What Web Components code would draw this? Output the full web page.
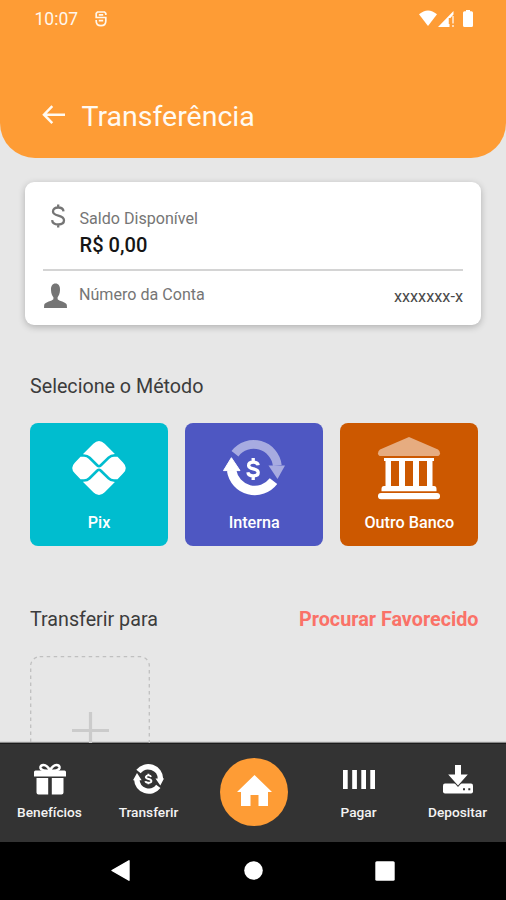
<!DOCTYPE html>
<html lang="pt-BR">
<head>
<meta charset="utf-8">
<title>Transferência</title>
<style>
html,body{margin:0;padding:0;background:#e7e7e7}
body{font-family:Roboto,"Liberation Sans",sans-serif}
</style>
</head>
<body>
<transfer-app></transfer-app>
<script>
const define = (name, css, html) => customElements.define(name, class extends HTMLElement {
  constructor() {
    super();
    const t = document.createElement('template');
    t.innerHTML = `<style>*{box-sizing:border-box}svg{display:block;overflow:visible}${css}</style>${html}`;
    this.attachShadow({mode: 'open'}).append(t.content.cloneNode(true));
  }
});

/* Line and solid icons, drawn in the inherited colour */
const icons = {
  back: ['0 0 24 20', '<path d="M10.3 1.2 2 9.7l8.3 8.500M2.200 9.700H23" fill="none" stroke="currentColor" stroke-width="2.500"/>'],
  app: ['0 0 12 16', '<path d="M10.8 4V2.400L9.500 1H2.500L1.200 2.400V6.500H10.800V10Q10.800 14.700 6 14.700T1.200 10V9M3.800 3.800H8.200M3.800 9.600H8.200" fill="none" stroke="currentColor" stroke-width="1.700"/>'],
  wifi: ['0 0 18 16', '<path d="M0 4.200Q9-3.400 18 4.200L9 16Z" fill="currentColor"/>'],
  signal: ['0 0 16 16', '<path d="M0 16 15.500 0V3.500L11.500 8V16Z" fill="currentColor"/><path d="M13.200 6.500H16V16H13.200Z" fill="#fe9c35"/><path d="M15 5V12.500M15 14V16" stroke="currentColor" stroke-width="1.200"/><path d="M11.500 7v6" stroke="#fe9c35" stroke-width="1.500"/>'],
  battery: ['0 0 10 17', '<path d="M3 0H7V1.200H8.500Q10 1.200 10 2.700V15.500Q10 17 8.500 17H1.500Q0 17 0 15.500V2.700Q0 1.200 1.500 1.200H3Z" fill="currentColor"/>'],
  dollar: ['0 0 14 24', '<path d="M12.500 7.300C12.300 4.800 10.200 3.500 7.200 3.500 4.200 3.500 2 4.900 2 7.500c0 5.500 11 2.900 11 8.800 0 2.700-2.400 4.200-5.700 4.200-3.600 0-5.900-1.600-6.200-4.400M7.200 .5V4M7.200 20V23.500" fill="none" stroke="currentColor" stroke-width="2.300"/>'],
  person: ['0 0 23 25', '<path d="M11.500.5C14.500.5 16.200 3 16 7c-.1 3.500-1.300 5.800-2.400 7.300v2c1 1.700 8.400 2.600 9.200 5.500L23 25H0l.2-3.200c.8-2.900 8.200-3.800 9.200-5.500v-2C8.300 12.800 7.100 10.500 7 7 6.800 3 8.500.5 11.500.5Z" fill="currentColor"/>'],
  pix: ['0 0 56 56', '<path d="M11.800 14.300 22.300 3.800Q28-1.800 33.700 3.800L43.900 14Q39.500 14 36.700 16.800L28.700 24.600Q28 25.200 27.300 24.600L19.500 16.800Q16.500 14 11.800 14.300ZM11.800 41.700Q16.500 42 19.500 39.200L27.300 31.400Q28 30.800 28.700 31.400L36.700 39.200Q39.500 42 43.900 42L33.700 52.200Q28 57.800 22.300 52.200Z" fill="currentColor"/><path d="M9.500 16.800H13Q15.700 16.800 17.600 18.700L25.500 26.400Q28 28.700 30.500 26.400L38.400 18.700Q40.300 16.800 43 16.800H46.500L52 22.400Q57.600 28 52 33.600L46.500 39.200H43Q40.300 39.200 38.400 37.300L30.500 29.600Q28 27.300 25.500 29.600L17.600 37.300Q15.700 39.200 13 39.200H9.500L4 33.600Q-1.600 28 4 22.400Z" fill="currentColor"/>'],
  cycle: ['0 0 62 56', '<g opacity=".5"><path d="M12 13.700A23.700 23.700 0 0 1 54.300 25.500" fill="none" stroke="currentColor" stroke-width="8.800"/><path d="M45.500 25.500H62L54.500 39Z" fill="currentColor"/></g><path d="M8.600 30.500A23.500 23.500 0 0 0 50.500 41.200" fill="none" stroke="currentColor" stroke-width="9.400"/><path d="M.5 30.600 8.400 17.700 17 30.600Z" fill="currentColor" stroke="currentColor" stroke-linejoin="round"/><path d="M35.200 25.200C34.800 22.900 33 22.200 30.200 22.200 27.300 22.200 25.600 23.400 25.600 25.400c0 4.500 9.600 2.400 9.600 7 0 2.200-2 3.400-5 3.400-3.200 0-5-1-5.300-3.600M30.200 18V22.500M30.200 35.500V40" fill="none" stroke="currentColor" stroke-width="3.300"/>'],
  bank: ['0 0 62 62', '<path opacity=".5" d="M31 0 60 12.500Q62 14 62 16.200 62 19 59 19H3Q0 19 0 16.200 0 14 2 12.500Z" fill="currentColor"/><path d="M6 21H56V24H54.500V49H56Q58.500 49 58.500 52V54.200H3.500V52Q3.500 49 6 49H7.500V24H6Z" fill="currentColor"/><path d="M6.500 24H55.500V49H6.500Z" fill="#cc5800"/><path d="M7.500 23.500h5.500v26H7.500ZM21 23.500h6v26h-6ZM35 23.500h6v26h-6ZM49 23.500H54.500v26h-5.500Z" fill="currentColor"/><rect y="56" width="62" height="6.200" rx="3" fill="currentColor"/>'],
  gift: ['0 0 32 32', '<path d="M16 8C13 8 7 8 6.500 5 6 1.500 12-.5 16 7.500 20-.5 26 1.500 25.500 5 25 8 19 8 16 8Z" fill="none" stroke="currentColor" stroke-width="2.600"/><path d="M1.500 7.500H30.500Q32 7.500 32 9V13.500H0V9Q0 7.500 1.500 7.500ZM2.500 15H14.200V31.500H4.500Q2.500 31.500 2.500 29.500ZM17.800 15H29.500V29.500Q29.500 31.500 27.500 31.500H17.800Z" fill="currentColor"/>'],
  swap: ['0 0 31 30', '<path d="M5.500 7.500A12.300 12.300 0 0 1 27.500 15M3.800 15.500A12 12 0 0 0 25.300 22.400" fill="none" stroke="currentColor" stroke-width="5.500"/><path d="M22.500 14.500H31L27.300 21.500ZM0 16.200 4 9 8.700 16.200Z" fill="currentColor"/><path d="M18.100 12.900Q17.500 11.400 15.400 11.400T12.800 13C12.800 15.700 18.400 14.400 18.400 17Q18.400 18.800 15.500 18.800T12.400 17.200M15.400 9.700V11.500M15.400 18.500V20.300" fill="none" stroke="currentColor" stroke-width="1.900"/>'],
  home: ['0 0 35 31', '<path d="M17.500 0 35 17H31V31H21.500V20H13.500V31H4V17H0Z" fill="currentColor"/>'],
  bars: ['0 0 32 19', '<path d="M0 0H4.700V19H0ZM9.200 0H13.900V19H9.200ZM18.300 0H23V19H18.300ZM27.300 0H32V19H27.300Z" fill="currentColor"/>'],
  deposit: ['0 0 30 29', '<path d="M2 18.500H28Q30 18.500 30 20.500V26.500Q30 28.500 28 28.500H2Q0 28.500 0 26.500V20.500Q0 18.500 2 18.500Z" fill="currentColor"/><path d="M12 0H18V9.500H24.800L15 20.500 5.200 9.500H12Z" fill="currentColor" stroke="#333" stroke-width="2" paint-order="stroke"/><path d="M20 23.200h2v2h-2ZM25.300 23.200h2v2h-2Z" fill="#333"/>'],
  sysback: ['0 0 19 21', '<path d="M18 .8V20.200L1 10.500Z" fill="currentColor" stroke="currentColor" stroke-width="1.400" stroke-linejoin="round"/>'],
  syshome: ['0 0 19 19', '<circle cx="9.500" cy="9.500" r="9.300" fill="currentColor"/>'],
  sysrecent: ['0 0 20 20', '<rect x=".3" y=".3" width="19.400" height="19.400" rx="1.500" fill="currentColor"/>'],
  plus: ['0 0 37 37', '<path d="M18.500 0V37M0 18.500H37" stroke="currentColor" stroke-width="3.200"/>']
};
customElements.define('app-icon', class extends HTMLElement {
  connectedCallback() {
    if (this.shadowRoot) return;
    const [box, body] = icons[this.getAttribute('name')];
    const [, , w, h] = box.split(' ');
    this.attachShadow({mode: 'open'}).innerHTML =
      `<style>:host{display:block;flex:none}svg{display:block;overflow:visible}</style><svg viewBox="${box}" width="${w}" height="${h}">${body}</svg>`;
  }
});

define('status-bar', `
:host{display:flex;align-items:center;height:38px;padding:0 33px 0 34.500px;color:#fff7ec}
.time{font-size:17.500px;line-height:38px}
.app{margin:-1px 0 0 16.500px}
.right{display:flex;align-items:flex-end;margin:-1px 0 0 auto;color:#fff}
.sig{margin:0 9px 0 1px}
.right app-icon:first-child{margin-bottom:1px}`,
`<span class="time">10:07</span><app-icon class="app" name="app"></app-icon>
<div class="right"><app-icon name="wifi"></app-icon><app-icon class="sig" name="signal"></app-icon><app-icon name="battery"></app-icon></div>`);

define('page-header', `
:host{display:flex;flex-direction:column;justify-content:space-between;height:157.500px;padding-bottom:21px;background:#fe9c35;border-radius:0 0 35px 35px;color:#fffaf2}
.row{display:flex;align-items:center;height:40px;padding-left:41.500px}
.title{margin-left:16px;font-size:28.500px;line-height:40px}
app-icon{margin-top:-3px}`,
`<status-bar></status-bar><div class="row"><app-icon name="back"></app-icon><span class="title"><slot></slot></span></div>`);

define('balance-card', `
:host{display:block;margin:24.500px 25px 0;height:142.500px;padding:22px 18px 0;background:#fff;border-radius:9px;box-shadow:0 2px 7px rgba(0,0,0,.24);color:#757575;font-size:16.100px}
.top{display:flex;height:66.500px;border-bottom:2px solid #d4d4d4}
.top app-icon{margin:0 15px 0 7.500px}
.label{line-height:28px;padding-top:1px}
.money{color:#151515;font-size:20.100px;font-weight:500;line-height:25px}
.bottom{display:flex;align-items:center;height:47px}
.bottom app-icon{margin:2px 12.500px 0 .5px}
.num{margin:4px 0 0 auto;color:#4a4a4a;font-size:16.300px}`,
`<div class="top"><app-icon name="dollar"></app-icon><div><div class="label">Saldo Disponível</div><div class="money">R$ 0,00</div></div></div>
<div class="bottom"><app-icon name="person"></app-icon><span>Número da Conta</span><span class="num">xxxxxxx-x</span></div>`);

define('section-title', `
:host{display:flex;justify-content:space-between;height:30px;margin:0 27.500px 0 30px;font-size:19.700px;line-height:30px;color:#3c3c3c}
::slotted(b){font-weight:700;color:#fa7268;font-size:19.800px}`,
`<span><slot></slot></span><slot name="action"></slot>`);

define('method-tile', `
:host{display:flex;flex-direction:column;align-items:center;height:123px;border-radius:8px;background:var(--tile);color:#fff}
.pic{display:flex;align-items:center;height:89px;padding-top:1.500px}
.label{font-size:16.200px;font-weight:500;line-height:22px;margin-top:.300px}`,
`<div class="pic"><slot name="icon"></slot></div><div class="label"><slot></slot></div>`);

define('method-grid', `
:host{display:grid;grid-template-columns:repeat(3,138px);gap:17.200px;margin:21.400px 0 0 30px}`, `<slot></slot>`);

define('add-favorite', `
:host{display:flex;margin:20.600px 0 0 30px;width:120px;color:#cbcbcb}
.box{position:relative;width:120px;height:150px;display:flex;align-items:center;justify-content:center}
.frame{position:absolute;inset:0}`,
`<div class="box"><svg class="frame" width="120" height="150"><rect x=".7" y=".7" width="118.600" height="148" rx="9" fill="none" stroke="#c0c0c0" stroke-width="1.300" stroke-dasharray="3.500 3.500"/></svg><app-icon name="plus"></app-icon></div>`);

define('nav-item', `
:host{display:flex;flex-direction:column;align-items:center;flex:none;width:99px;color:#fff}
.pic{display:flex;align-items:center;height:40px;margin-top:15px}
.label{font-size:13.700px;font-weight:500;line-height:20px;margin-top:2.500px;color:#f3f3f3}`,
`<div class="pic"><slot name="icon"></slot></div><div class="label"><slot></slot></div>`);

define('nav-bar', `
:host{display:flex;height:98.500px;background:#333;border-top:1.500px solid #1c1c1c;box-shadow:0 -1px 1px rgba(0,0,0,.4)}
.home{display:flex;flex:none;align-items:center;justify-content:center;width:68px;height:68px;margin:14px 21px 0 22px;border-radius:50%;background:#fe9c35;color:#fff}
.home app-icon{margin-top:-3px}`,
`<slot name="left"></slot><div class="home"><app-icon name="home"></app-icon></div><slot></slot>`);

define('system-bar', `
:host{display:flex;align-items:center;height:58px;padding-left:111px;background:#000;color:#fff}
.h{margin-left:114px}.r{margin-left:111.500px}`,
`<app-icon name="sysback"></app-icon><app-icon class="h" name="syshome"></app-icon><app-icon class="r" name="sysrecent"></app-icon>`);

define('transfer-app', `
:host{display:flex;flex-direction:column;width:506px;height:900px;overflow:hidden;background:#e7e7e7}
main{height:743px;flex:none;overflow:hidden}
.m{margin-top:47px}.f{margin-top:59.500px}
method-tile{--tile:#00bdcf}
.interna{--tile:#4e57c2}.banco{--tile:#cc5800}`,
`<main>
<page-header>Transferência</page-header>
<balance-card></balance-card>
<section-title class="m">Selecione o Método</section-title>
<method-grid>
<method-tile><app-icon slot="icon" name="pix"></app-icon>Pix</method-tile>
<method-tile class="interna"><app-icon slot="icon" name="cycle"></app-icon>Interna</method-tile>
<method-tile class="banco"><app-icon slot="icon" name="bank"></app-icon>Outro Banco</method-tile>
</method-grid>
<section-title class="f">Transferir para<b slot="action">Procurar Favorecido</b></section-title>
<add-favorite></add-favorite>
</main>
<nav-bar>
<nav-item slot="left"><app-icon slot="icon" name="gift"></app-icon>Benefícios</nav-item>
<nav-item slot="left"><app-icon slot="icon" name="swap"></app-icon>Transferir</nav-item>
<nav-item><app-icon slot="icon" name="bars"></app-icon>Pagar</nav-item>
<nav-item><app-icon slot="icon" name="deposit"></app-icon>Depositar</nav-item>
</nav-bar>
<system-bar></system-bar>`);
</script>
</body>
</html>
